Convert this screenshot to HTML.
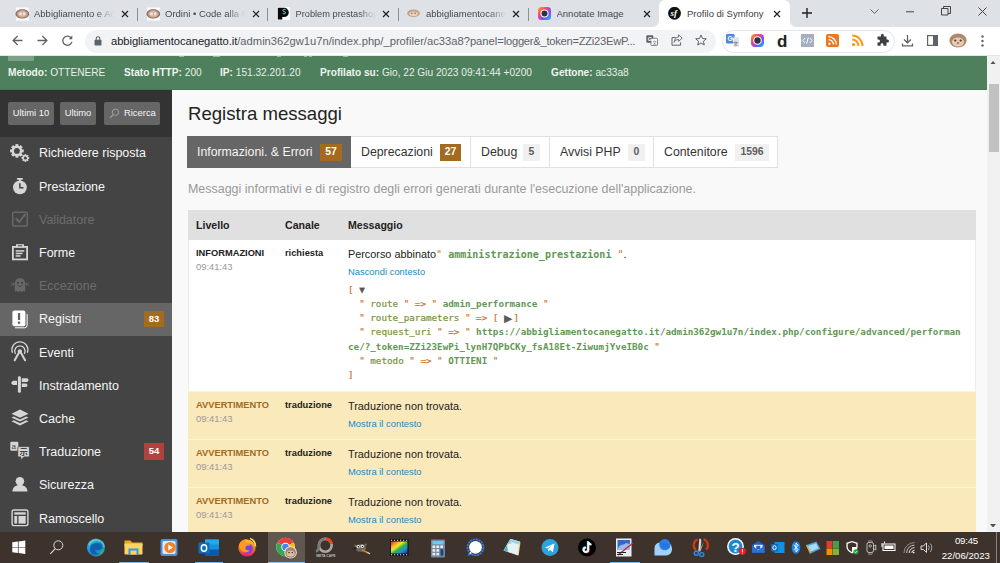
<!DOCTYPE html>
<html lang="it">
<head>
<meta charset="utf-8">
<title>Profilo di Symfony</title>
<style>
*{box-sizing:border-box;margin:0;padding:0}
html,body{width:1000px;height:563px;overflow:hidden;background:#fff;font-family:"Liberation Sans",Arial,sans-serif;}
body{position:relative}
.abs{position:absolute}
/* ---------- chrome ---------- */
#tabstrip{position:absolute;left:0;top:0;width:1000px;height:27px;background:#dee1e6}
.tab{position:absolute;top:0;height:27px;font-size:9.5px;color:#45494d;white-space:nowrap}
.tab .t{position:absolute;top:8px;left:0;overflow:hidden;height:13px;line-height:12px}
.tab .x{position:absolute;top:6px;font-size:11px;color:#333;line-height:14px}
.sep{position:absolute;top:8px;width:1px;height:13px;background:#8b8e93}
#active{position:absolute;left:659px;top:0;width:131px;height:27px;background:#fff;border-radius:6px 6px 0 0}
#toolbar{position:absolute;left:0;top:27px;width:1000px;height:28px;background:#fff}
#tbline{position:absolute;left:0;top:55px;width:1000px;height:1px;background:#e4e6e8}
#omni{position:absolute;left:85px;top:30px;width:630.500px;height:23px;border-radius:12px;background:#f1f3f4}
#url{position:absolute;left:111px;top:34px;font-size:11.2px;line-height:14px;color:#5f6368;white-space:nowrap;letter-spacing:-0.05px}
#url b{font-weight:normal;color:#202124}
#extpill{position:absolute;left:722px;top:30px;width:173px;height:23px;border-radius:12px;background:#fff;border:1px solid #e3e5e8}
/* ---------- page ---------- */
#page{position:absolute;left:0;top:56px;width:987px;height:476px;background:#f9f9f9;overflow:hidden}
#green{position:absolute;left:0;top:0;width:987px;height:33.700px;background:#4f805d;border-bottom:1px solid #48775a}
#green .s{position:absolute;top:10px;font-size:10.15px;line-height:13px;color:#e6efe8;white-space:nowrap}
#green .s b{color:#eef4ef}
#side{position:absolute;left:0;top:34px;width:172px;height:442px;background:#444}
#short{position:absolute;left:0;top:0;width:172px;height:47.300px;background:#333}
.btn{position:absolute;top:12px;height:22.500px;background:#666;border-radius:2px;color:#f5f5f5;font-size:9.4px;line-height:22px;text-align:center;white-space:nowrap}
.mi{position:absolute;left:0;width:172px;height:33.200px;color:#f5f5f5;font-size:12.5px;line-height:33.200px}
.mi span{position:absolute;left:39px;top:.4px;white-space:nowrap}
.mi.dis{color:#6c6c6c}
.mi.sel{background:#666}
.mi svg{position:absolute}
.cnt{position:absolute;left:144px;top:7.500px;width:20px;height:16.500px;line-height:16.500px;text-align:center;font-size:9.5px;font-weight:bold;color:#fff;background:#a46a1f}
/* content */
h2{position:absolute;left:188px;top:46.5px;font-size:18.6px;font-weight:normal;color:#222;line-height:22px;white-space:nowrap}
.tabs{position:absolute;top:80px;height:31.500px;font-size:12.3px;line-height:30px;color:#333;white-space:nowrap;background:#fff;border:1px solid #e0e0e0;border-left:none}
.tabs.act{background:#666;color:#f5f5f5;border:1px solid #666}
.tabs .lb{position:absolute;top:0}
.bdg{position:absolute;top:7px;height:16.5px;line-height:16.5px;font-size:10.4px;font-weight:bold;text-align:center;background:#f0f0f0;color:#5e5e5e}
.bdg.w{background:#a46a1f;color:#fff}
#desc{position:absolute;left:188px;top:126px;font-size:12.46px;line-height:14px;color:#999;white-space:nowrap}
#tbl{position:absolute;left:187.500px;top:154px;width:788px;height:330px;background:#fff}
#th{position:absolute;left:0;top:0;width:788px;height:30px;background:#e0e0e0}
.th{position:absolute;top:9px;font-size:10.6px;font-weight:bold;color:#222;line-height:13px}
.row{position:absolute;left:0;width:788px}
.row.first{box-shadow:inset 1px 0 #ececec,inset -1px 0 #ececec}
.row.w{background:#fae9ba;border-top:1px solid #fcf3da}
.lv{position:absolute;left:8.500px;font-size:9.3px;font-weight:bold;color:#222;line-height:12px;white-space:nowrap}
.row.w .lv{color:#a46a1f}
.tm{position:absolute;left:8.500px;font-size:9.4px;color:#999;line-height:12px}
.ch{position:absolute;left:97.500px;font-size:9.3px;font-weight:bold;color:#222;line-height:12px}
.msg{position:absolute;left:160.500px;font-size:10.85px;color:#222;line-height:14px;white-space:nowrap}
.lnk{position:absolute;left:160.500px;font-size:9.4px;color:#218bc3;line-height:12px;white-space:nowrap}
.mono{font-family:"DejaVu Sans Mono","Liberation Mono",monospace}
.dump{position:absolute;left:160.500px;top:42.700px;font-family:"DejaVu Sans Mono","Liberation Mono",monospace;font-size:9.25px;line-height:14.25px;color:#cc7832;white-space:pre}
.k{color:#789339}
.dump{-webkit-text-stroke:.2px}
.sv{-webkit-text-stroke:0}
.tg2{display:inline-block;width:9.500px;font-family:"DejaVu Sans",sans-serif;font-size:11px;line-height:0;color:#5c5c5c;vertical-align:-.5px;-webkit-text-stroke:0}
.sv{color:#629755;font-weight:bold}
.tg{color:#555}
/* scrollbar */
#sb{position:absolute;left:987px;top:56px;width:13px;height:476px;background:#f1f1f1}
#thumb{position:absolute;left:1.5px;top:28px;width:10.5px;height:68px;background:#c1c1c1}
/* taskbar */
#task{position:absolute;left:0;top:532px;width:1000px;height:31px;background:#3d332c}
.ti{position:absolute;top:0;width:37px;height:31px}
.clock{position:absolute;font-size:9.650px;color:#fff;white-space:nowrap;line-height:11px}
</style>
</head>
<body>
<div id="tabstrip"></div>
<div id="active"></div>
<div id="toolbar"></div>
<div id="tbline"></div>
<div id="omni"></div>
<div id="url"><b>abbigliamentocanegatto.it</b><span style="letter-spacing:0">/admin362gw1u7n/index.php/_profiler/ac33a8?panel=</span><span style="letter-spacing:-0.27px">logger&amp;_token=ZZi23EwP...</span></div>
<div id="extpill"></div>

<!-- tabs -->
<div class="tab" style="left:7px;width:131px">
  <svg class="abs" style="left:7.500px;top:6.500px" width="15" height="14" viewBox="0 0 15 14"><defs><radialGradient id="fg"><stop offset="0" stop-color="#eadccd"/><stop offset=".45" stop-color="#dcc4ae"/><stop offset=".8" stop-color="#b08c78"/><stop offset="1" stop-color="#6e4e4a"/></radialGradient></defs><rect x="1" y=".5" width="12.700" height="13" fill="#fff"/><ellipse cx="7.300" cy="6.900" rx="6.800" ry="4.700" fill="url(#fg)"/><ellipse cx="5.600" cy="6.800" rx="1.500" ry="1" fill="#f3ebe2"/><ellipse cx="9" cy="6.800" rx="1.500" ry="1" fill="#f3ebe2"/><path d="M7.300 5v3.800" stroke="#a88" stroke-width=".6"/></svg>
  <div class="t" style="left:27px;width:82px;-webkit-mask-image:linear-gradient(90deg,#000 62px,transparent 80px)">Abbigliamento e Acc</div>
  <svg class="abs" style="left:114px;top:10px" width="8" height="8" viewBox="0 0 8 8"><path d="M1 1l6 6M7 1l-6 6" stroke="#202124" stroke-width="1.2"/></svg>
</div>
<div class="sep" style="left:137px"></div>
<div class="tab" style="left:138px;width:131px">
  <svg class="abs" style="left:7.500px;top:6.500px" width="15" height="14" viewBox="0 0 15 14"><rect x="1" y=".5" width="12.700" height="13" fill="#fff"/><ellipse cx="7.300" cy="6.900" rx="6.800" ry="4.700" fill="url(#fg)"/><ellipse cx="5.600" cy="6.800" rx="1.500" ry="1" fill="#f3ebe2"/><ellipse cx="9" cy="6.800" rx="1.500" ry="1" fill="#f3ebe2"/><path d="M7.300 5v3.800" stroke="#a88" stroke-width=".6"/></svg>
  <div class="t" style="left:27px;width:82px;-webkit-mask-image:linear-gradient(90deg,#000 62px,transparent 80px)">Ordini • Code alla Mo</div>
  <svg class="abs" style="left:113.5px;top:10px" width="8" height="8" viewBox="0 0 8 8"><path d="M1 1l6 6M7 1l-6 6" stroke="#202124" stroke-width="1.2"/></svg>
</div>
<div class="sep" style="left:267px"></div>
<div class="tab" style="left:268.5px;width:131px">
  <svg class="abs" style="left:8.5px;top:7px" width="13" height="13" viewBox="0 0 13 13"><rect width="13" height="13" fill="#fff"/><path d="M.8 12.500V.8h6.400a4.600 4.600 0 010 9.200H5.300v2.500z" fill="#0a0a0a"/><path d="M8.600 2.600c-1.300-.6-2.800-.1-2.700 1 .1 1.200 2.600.8 2.700 2 .1 1.100-1.600 1.500-2.900.8" stroke="#7fe0ee" stroke-width="1" fill="none"/></svg>
  <div class="t" style="left:27px;width:82px;-webkit-mask-image:linear-gradient(90deg,#000 62px,transparent 80px);font-size:9.250px">Problem prestashop</div>
  <svg class="abs" style="left:113px;top:10px" width="8" height="8" viewBox="0 0 8 8"><path d="M1 1l6 6M7 1l-6 6" stroke="#202124" stroke-width="1.2"/></svg>
</div>
<div class="sep" style="left:398px"></div>
<div class="tab" style="left:399px;width:131px">
  <svg class="abs" style="left:8px;top:7px" width="13" height="13" viewBox="0 0 13 13"><ellipse cx="6.500" cy="6.300" rx="6.300" ry="3.800" fill="#c4a088"/><ellipse cx="6.500" cy="6.700" rx="4.300" ry="2.300" fill="#e6d2be"/><circle cx="4.800" cy="6.300" r=".8" fill="#8a6a58"/><circle cx="8.200" cy="6.300" r=".8" fill="#8a6a58"/></svg>
  <div class="t" style="left:27px;width:82px;-webkit-mask-image:linear-gradient(90deg,#000 62px,transparent 80px)">abbigliamentocanegatto</div>
  <svg class="abs" style="left:113px;top:10px" width="8" height="8" viewBox="0 0 8 8"><path d="M1 1l6 6M7 1l-6 6" stroke="#202124" stroke-width="1.2"/></svg>
</div>
<div class="sep" style="left:528px"></div>
<div class="tab" style="left:529.5px;width:131px">
  <svg class="abs" style="left:8px;top:7px" width="13" height="13" viewBox="0 0 13 13"><defs><linearGradient id="ag" x1="0" y1="0" x2="1" y2="1"><stop offset="0" stop-color="#ffb300"/><stop offset=".35" stop-color="#ff3d7f"/><stop offset=".65" stop-color="#7c4dff"/><stop offset="1" stop-color="#00c6ff"/></linearGradient></defs><rect width="13" height="13" rx="3.500" fill="url(#ag)"/><circle cx="6.500" cy="6.500" r="4" fill="#fff"/><circle cx="6.500" cy="6.500" r="3" fill="#2d3440"/></svg>
  <div class="t" style="left:27px;width:82px">Annotate Image</div>
  <svg class="abs" style="left:113.500px;top:10px" width="8" height="8" viewBox="0 0 8 8"><path d="M1 1l6 6M7 1l-6 6" stroke="#202124" stroke-width="1.2"/></svg>
</div>
<svg class="abs" style="left:653px;top:21px" width="6" height="6" viewBox="0 0 6 6"><path d="M6 0v6H0A6 6 0 006 0z" fill="#fff"/></svg>
<svg class="abs" style="left:790px;top:21px" width="6" height="6" viewBox="0 0 6 6"><path d="M0 0v6h6A6 6 0 010 0z" fill="#fff"/></svg>
<div class="tab" style="left:660px;width:131px;color:#3c4043">
  <svg class="abs" style="left:8px;top:7px" width="13" height="13" viewBox="0 0 13 13"><circle cx="6.500" cy="6.300" r="6.400" fill="#111"/><text x="2.600" y="9" font-family="Liberation Serif,serif" font-style="italic" font-weight="bold" font-size="9" fill="#fff">sf</text></svg>
  <div class="t" style="left:27px;width:82px">Profilo di Symfony</div>
  <svg class="abs" style="left:113px;top:10px" width="8" height="8" viewBox="0 0 8 8"><path d="M1 1l6 6M7 1l-6 6" stroke="#202124" stroke-width="1.2"/></svg>
</div>
<svg class="abs" style="left:802px;top:8px" width="10" height="10" viewBox="0 0 10 10"><path d="M5 0v10M0 5h10" stroke="#202124" stroke-width="1.400"/></svg>
<svg class="abs" style="left:870px;top:9px" width="9" height="5" viewBox="0 0 9 5"><path d="M.5.500l4 3.800 4-3.800" stroke="#5f6368" stroke-width="1" fill="none"/></svg>
<svg class="abs" style="left:906px;top:11px" width="8" height="2" viewBox="0 0 8 2"><path d="M0 .8h8" stroke="#444" stroke-width="1"/></svg>
<svg class="abs" style="left:941px;top:6px" width="10" height="10" viewBox="0 0 10 10"><path d="M.5 2.500h6.500v6.500H.5zM2.500 2.500v-2h7v7h-2.500" stroke="#444" stroke-width="1" fill="none"/></svg>
<svg class="abs" style="left:978px;top:7px" width="9" height="9" viewBox="0 0 9 9"><path d="M.5.500l8 8M8.500.500l-8 8" stroke="#444" stroke-width="1"/></svg>
<!-- toolbar icons -->
<svg class="abs" style="left:12px;top:35px" width="11" height="11" viewBox="0 0 11 11"><path d="M10.500 5.500H1.200M5.600 1L1.100 5.500l4.500 4.500" stroke="#5f6368" stroke-width="1.300" fill="none"/></svg>
<svg class="abs" style="left:37px;top:35px" width="11" height="11" viewBox="0 0 11 11"><path d="M.5 5.500h9.300M5.400 1l4.500 4.500-4.500 4.500" stroke="#5f6368" stroke-width="1.300" fill="none"/></svg>
<svg class="abs" style="left:62px;top:35px" width="11" height="11" viewBox="0 0 11 11"><path d="M9.400 3.300A4.600 4.600 0 109.900 6.800" stroke="#5f6368" stroke-width="1.300" fill="none"/><path d="M10.300.6v3.600H6.700z" fill="#5f6368"/></svg>
<svg class="abs" style="left:94px;top:36px" width="8" height="10" viewBox="0 0 8 10"><rect x=".5" y="3.800" width="7" height="5.700" rx=".8" fill="#5f6368"/><path d="M2.200 4V2.600a1.800 1.800 0 013.600 0V4" stroke="#5f6368" stroke-width="1.100" fill="none"/></svg>
<svg class="abs" style="left:646px;top:35px" width="12" height="11" viewBox="0 0 12 11"><rect x=".3" y=".3" width="7" height="7.500" rx="1" fill="#5f6368"/><rect x="5" y="3.300" width="6.500" height="7.300" rx="1" fill="#fff" stroke="#5f6368" stroke-width=".8"/><text x="1.800" y="6.300" font-family="Liberation Sans,sans-serif" font-size="5.500" font-weight="bold" fill="#fff">G</text><text x="6.300" y="9.300" font-family="Noto Sans CJK SC,sans-serif" font-size="4.500" fill="#5f6368">文</text></svg>
<svg class="abs" style="left:671px;top:34px" width="12" height="12" viewBox="0 0 12 12"><path d="M4.800 3.600H1v7.600h8.600V8.400" stroke="#5f6368" stroke-width="1" fill="none"/><path d="M7.600.8l3.600 3.300-3.600 3.300V5.500C5.300 5.500 4 6.500 3.200 8.300 3.400 5.400 4.900 3.200 7.600 2.800z" stroke="#5f6368" stroke-width=".9" fill="none" stroke-linejoin="round"/></svg>
<svg class="abs" style="left:695px;top:34px" width="12" height="12" viewBox="0 0 12 12"><path d="M6 1l1.500 3.500 3.800.3-2.900 2.500.9 3.700L6 9 2.700 11l.9-3.700L.7 4.800l3.800-.3z" stroke="#5f6368" stroke-width="1" fill="none" stroke-linejoin="round"/></svg>
<!-- extension icons -->
<svg class="abs" style="left:726px;top:34px" width="13" height="13" viewBox="0 0 13 13"><rect x="0" y="0" width="8.500" height="9.500" rx="1.200" fill="#4a86e8"/><path d="M6 3.500h7v8.300a1 1 0 01-1 1H8z" fill="#dfe3ea"/><text x="1.500" y="7.300" font-family="Liberation Sans,sans-serif" font-size="6.500" font-weight="bold" fill="#fff">G</text><text x="7.300" y="11.300" font-family="Noto Sans CJK SC,sans-serif" font-size="5" fill="#666">文</text></svg>
<svg class="abs" style="left:751px;top:34px" width="13" height="13" viewBox="0 0 13 13"><rect width="13" height="13" rx="4" fill="url(#ag)"/><circle cx="6.500" cy="6.500" r="4.300" fill="#fff"/><circle cx="6.500" cy="6.500" r="3.200" fill="#2d3440"/></svg>
<div class="abs" style="left:777px;top:31.500px;font-size:17px;font-weight:bold;color:#222;line-height:20px">d</div>
<svg class="abs" style="left:801px;top:34px" width="13" height="13" viewBox="0 0 13 13"><rect width="13" height="13" fill="#a4afc0"/><path d="M4.200 4L1.800 6.500 4.200 9M8.800 4l2.400 2.500L8.800 9M7.300 3.500L5.700 9.500" stroke="#fff" stroke-width="1" fill="none"/></svg>
<svg class="abs" style="left:826px;top:34px" width="13" height="13" viewBox="0 0 13 13"><rect width="13" height="13" rx="2" fill="#f0761c"/><circle cx="3.500" cy="9.700" r="1.200" fill="#fff"/><path d="M2.400 5.600a5 5 0 015 5M2.400 2.600a8 8 0 018 8" stroke="#fff" stroke-width="1.400" fill="none"/></svg>
<svg class="abs" style="left:851px;top:34px" width="13" height="13" viewBox="0 0 13 13"><circle cx="2.600" cy="10.600" r="1.700" fill="#f79a1d"/><path d="M1.200 5.600a6.300 6.300 0 016.300 6.300M1.200 1.600a10.300 10.300 0 0110.300 10.300" stroke="#f79a1d" stroke-width="2" fill="none"/></svg>
<svg class="abs" style="left:876px;top:34px" width="13" height="13" viewBox="0 0 13 13"><path d="M5 1.300a1.400 1.400 0 012.800 0V2.500h2.700v2.900h1a1.500 1.500 0 010 3h-1v3.300H7.400v-1a1.400 1.400 0 00-2.800 0v1H1.500V8.500h1a1.500 1.500 0 000-3h-1V2.500H5z" fill="#3c4043"/></svg>
<svg class="abs" style="left:901px;top:34px" width="13" height="13" viewBox="0 0 13 13"><path d="M6.500 1v7.500M3 5.500l3.500 3.300L10 5.500M1.500 9.500v2.300h10V9.500" stroke="#5f6368" stroke-width="1.300" fill="none"/></svg>
<svg class="abs" style="left:927px;top:35px" width="11" height="11" viewBox="0 0 11 11"><rect x=".6" y=".6" width="9.800" height="9.800" stroke="#5f6368" stroke-width="1.200" fill="none"/><rect x="6" y=".6" width="4.400" height="9.800" fill="#5f6368"/></svg>
<svg class="abs" style="left:949px;top:32px" width="18" height="17" viewBox="0 0 18 17"><ellipse cx="9" cy="8.500" rx="8.600" ry="7" fill="#b08868"/><ellipse cx="9" cy="10" rx="6" ry="4.500" fill="#e4cdb4"/><circle cx="6.300" cy="8.500" r="1.100" fill="#4a3426"/><circle cx="11.700" cy="8.500" r="1.100" fill="#4a3426"/><ellipse cx="9" cy="11" rx="1.300" ry=".8" fill="#8a5f48"/></svg>
<svg class="abs" style="left:981px;top:35px" width="3" height="12" viewBox="0 0 3 12"><circle cx="1.500" cy="1.500" r="1.200" fill="#5f6368"/><circle cx="1.500" cy="6" r="1.200" fill="#5f6368"/><circle cx="1.500" cy="10.500" r="1.200" fill="#5f6368"/></svg>

<div id="page">
  <div id="green">
    <div class="abs" style="left:8px;top:0;width:26px;height:5px;background:rgba(255,255,255,.25)"></div>
    <div class="abs" style="left:179px;top:0;width:5px;height:1.300px;background:rgba(255,255,255,.45)"></div><div class="abs" style="left:213px;top:0;width:7px;height:1.300px;background:rgba(255,255,255,.45)"></div><div class="abs" style="left:277px;top:0;width:4px;height:1.300px;background:rgba(255,255,255,.45)"></div><div class="abs" style="left:304px;top:0;width:3px;height:1.300px;background:rgba(255,255,255,.45)"></div><div class="abs" style="left:309px;top:0;width:3px;height:1.300px;background:rgba(255,255,255,.45)"></div><div class="abs" style="left:343px;top:0;width:5px;height:1.300px;background:rgba(255,255,255,.45)"></div>
    <div class="s" style="left:8px"><b>Metodo:</b> OTTENERE</div>
    <div class="s" style="left:124px"><b>Stato HTTP:</b> 200</div>
    <div class="s" style="left:220px"><b>IP:</b> 151.32.201.20</div>
    <div class="s" style="left:320px"><b>Profilato su:</b> Gio, 22 Giu 2023 09:41:44 +0200</div>
    <div class="s" style="left:551px"><b>Gettone:</b> ac33a8</div>
  </div>
  <div id="side">
    <div id="short">
      <div class="btn" style="left:8px;width:46px">Ultimi 10</div>
      <div class="btn" style="left:60px;width:36px">Ultimo</div>
      <div class="btn" style="left:104px;width:56px;text-align:left;padding-left:20px"><svg class="abs" style="left:5px;top:6px" width="11" height="11" viewBox="0 0 11 11"><circle cx="6.500" cy="4.200" r="3.200" stroke="#a0a0a0" stroke-width="1" fill="none"/><path d="M4.200 6.600L1 9.800" stroke="#a0a0a0" stroke-width="1.200"/></svg>Ricerca</div>
    </div>
    <div class="mi" style="top:47.0px"><svg style="left:0;top:-0.0px" width="40" height="33" viewBox="0 0 40 33"><g fill="#d6d6d6"><mask id="gm"><rect width="40" height="33" fill="#fff"/><circle cx="16.900" cy="13.900" r="2.900" fill="#000"/><circle cx="25.400" cy="21" r="1.500" fill="#000"/></mask><g mask="url(#gm)"><g transform="translate(16.9 13.9)"><rect x="-1.50" y="-6.80" width="3.00" height="6.80" transform="rotate(0.0)"/><rect x="-1.50" y="-6.80" width="3.00" height="6.80" transform="rotate(45.0)"/><rect x="-1.50" y="-6.80" width="3.00" height="6.80" transform="rotate(90.0)"/><rect x="-1.50" y="-6.80" width="3.00" height="6.80" transform="rotate(135.0)"/><rect x="-1.50" y="-6.80" width="3.00" height="6.80" transform="rotate(180.0)"/><rect x="-1.50" y="-6.80" width="3.00" height="6.80" transform="rotate(225.0)"/><rect x="-1.50" y="-6.80" width="3.00" height="6.80" transform="rotate(270.0)"/><rect x="-1.50" y="-6.80" width="3.00" height="6.80" transform="rotate(315.0)"/></g><circle cx="16.900" cy="13.900" r="5.300"/><g transform="translate(25.4 21)"><rect x="-0.85" y="-3.90" width="1.70" height="3.90" transform="rotate(0.0)"/><rect x="-0.85" y="-3.90" width="1.70" height="3.90" transform="rotate(45.0)"/><rect x="-0.85" y="-3.90" width="1.70" height="3.90" transform="rotate(90.0)"/><rect x="-0.85" y="-3.90" width="1.70" height="3.90" transform="rotate(135.0)"/><rect x="-0.85" y="-3.90" width="1.70" height="3.90" transform="rotate(180.0)"/><rect x="-0.85" y="-3.90" width="1.70" height="3.90" transform="rotate(225.0)"/><rect x="-0.85" y="-3.90" width="1.70" height="3.90" transform="rotate(270.0)"/><rect x="-0.85" y="-3.90" width="1.70" height="3.90" transform="rotate(315.0)"/></g><circle cx="25.400" cy="21" r="3"/></g></g></svg><span>Richiedere risposta</span></div>
    <div class="mi" style="top:80.2px"><svg style="left:0;top:-0.2px" width="40" height="33" viewBox="0 0 40 33"><g fill="#d6d6d6"><circle cx="19.900" cy="17.300" r="6.900"/><rect x="16.800" y="8" width="6.200" height="1.700" rx=".8"/><rect x="19" y="9" width="1.800" height="2"/><path d="M19.900 13.200v4.600h3.600" stroke="#444" stroke-width="1.500" fill="none"/></g></svg><span>Prestazione</span></div>
    <div class="mi dis" style="top:113.4px"><svg style="left:0;top:-0.4px" width="40" height="33" viewBox="0 0 40 33"><g fill="none" stroke="#686868" stroke-width="1.500"><rect x="12.700" y="9.300" width="14.600" height="13.600" rx="1"/><path d="M15.800 15.200l3.400 3.800 6.400-8.200" stroke-width="1.900"/></g></svg><span>Validatore</span></div>
    <div class="mi" style="top:146.6px"><svg style="left:0;top:-0.6px" width="40" height="33" viewBox="0 0 40 33"><g><path d="M12 10h16v14.300H12z" fill="#d6d6d6"/><rect x="13.800" y="11.800" width="12.400" height="10.700" fill="#444"/><rect x="16" y="8.200" width="8" height="3.300" fill="#d6d6d6"/><rect x="17.800" y="9.300" width="4.400" height="1" fill="#444"/><rect x="15.700" y="14.200" width="8.600" height="1.500" fill="#d6d6d6"/><rect x="15.700" y="16.700" width="6.800" height="1.500" fill="#d6d6d6"/><rect x="15.700" y="19.200" width="4.800" height="1.500" fill="#d6d6d6"/></g></svg><span>Forme</span></div>
    <div class="mi dis" style="top:179.8px"><svg style="left:0;top:-0.8px" width="40" height="33" viewBox="0 0 40 33"><g fill="#686868"><path d="M14.800 23V14.200a5.200 5.200 0 0110.400 0V23l-1.800-1.300-1.700 1.300-1.700-1.300-1.700 1.300-1.700-1.300z"/><path d="M11 13.500l1.500 1.200 1.500-.5v1.800l-2-.3-1.200 1.200M29 13.500l-1.500 1.200-1.500-.5v1.800l2-.3 1.200 1.200" stroke="#686868" stroke-width=".9" fill="none"/><circle cx="18" cy="13.800" r="1.100" fill="#444"/><circle cx="22" cy="13.800" r="1.100" fill="#444"/><path d="M17.500 16.500q2.500 2 5 0" stroke="#444" stroke-width=".9" fill="none"/></g></svg><span>Eccezione</span></div>
    <div class="mi sel" style="top:213.0px"><svg style="left:0;top:-1.0px" width="40" height="33" viewBox="0 0 40 33"><g><path d="M15 25.800h9.500a2.600 2.600 0 002.600-2.600V12" stroke="#fff" stroke-width="1" fill="none"/><rect x="12.400" y="8.600" width="13" height="15.600" rx="2" fill="#fff"/><rect x="17.900" y="11" width="2.300" height="7" fill="#666"/><rect x="17.900" y="19.500" width="2.300" height="2.300" fill="#666"/></g></svg><span>Registri</span><div class="cnt">83</div></div>
    <div class="mi" style="top:246.2px"><svg style="left:0;top:-1.2px" width="40" height="33" viewBox="0 0 40 33"><g stroke="#d6d6d6" fill="none" stroke-linecap="round"><circle cx="19.900" cy="16.300" r="2.100" fill="#d6d6d6" stroke="none"/><path d="M19 17.500l-4.300 7.800M20.800 17.500l4.300 7.800" stroke-width="2"/><path d="M15.300 18.500a5.200 5.200 0 119.200 0" stroke-width="1.300"/><path d="M12.300 17.300a8 8 0 1115.200 0" stroke-width="1.300"/></g></svg><span>Eventi</span></div>
    <div class="mi" style="top:279.4px"><svg style="left:0;top:-1.4px" width="40" height="33" viewBox="0 0 40 33"><g fill="#d6d6d6"><rect x="17.900" y="8.200" width="3" height="16.600" rx="1.400"/><path d="M17 12.800v4.200h-4.200L11 14.900l1.800-2.100z"/><path d="M21.800 10.200h5.600l1.400 1.900-1.400 1.900h-5.600zM21.800 15.400h4.600l1.300 1.800-1.300 1.800h-4.600z"/></g></svg><span>Instradamento</span></div>
    <div class="mi" style="top:312.6px"><svg style="left:0;top:-1.6px" width="40" height="33" viewBox="0 0 40 33"><g fill="#d6d6d6"><path d="M20 8.600l8.500 4.100-8.500 4.100-8.500-4.100z"/><path d="M11.500 16.500l2.300-1.100 6.200 3 6.200-3 2.300 1.100-8.500 4.100z"/><path d="M11.500 20.300l2.300-1.100 6.200 3 6.200-3 2.300 1.100-8.500 4.100z"/></g></svg><span>Cache</span></div>
    <div class="mi" style="top:345.8px"><svg style="left:0;top:-1.8px" width="40" height="33" viewBox="0 0 40 33"><g fill="#d6d6d6"><path d="M11.300 7.800h6a1 1 0 011 1v7a1 1 0 01-1 1h-6a1 1 0 01-1-1v-7a1 1 0 011-1z"/><path d="M18.800 12.600h9.600a1 1 0 011 1v8.300a1 1 0 01-1 1h-4.600l-3 3v-3h-2a1 1 0 01-1-1v-8.300a1 1 0 011-1z" stroke="#444" stroke-width=".8"/><text x="11.600" y="15.300" font-family="Liberation Sans,sans-serif" font-size="8" fill="#444">a</text><text x="19.400" y="21.300" font-family="Noto Sans CJK SC,sans-serif" font-size="8.400" font-weight="bold" fill="#444">示</text></g></svg><span>Traduzione</span><div class="cnt" style="background:#b0413e">54</div></div>
    <div class="mi" style="top:379.0px"><svg style="left:0;top:-2.0px" width="40" height="33" viewBox="0 0 40 33"><g fill="#d6d6d6"><circle cx="19.900" cy="14.200" r="4.300"/><path d="M12.400 24.600c0-4 3-6.500 7.500-6.500s7.500 2.500 7.500 6.500z"/></g></svg><span>Sicurezza</span></div>
    <div class="mi" style="top:412.2px"><svg style="left:0;top:-2.2px" width="40" height="33" viewBox="0 0 40 33"><g><rect x="12.100" y="10" width="15.800" height="15.600" rx="1.800" fill="none" stroke="#d6d6d6" stroke-width="1.400"/><rect x="14.300" y="12.300" width="11.400" height="2.300" fill="#d6d6d6"/><rect x="14.300" y="16" width="2.800" height="7.600" fill="#d6d6d6"/><rect x="18.500" y="16" width="7.200" height="7.600" fill="#d6d6d6"/></g></svg><span>Ramoscello</span></div>
  </div>
  <h2>Registra messaggi</h2>
  <div class="tabs act" style="left:187px;width:164px"><span class="lb" style="left:9px">Informazioni. &amp; Errori</span><div class="bdg w" style="left:132px;width:22px">57</div></div>
  <div class="tabs" style="left:351px;width:120px"><span class="lb" style="left:10px">Deprecazioni</span><div class="bdg w" style="left:89px;width:21px">27</div></div>
  <div class="tabs" style="left:471px;width:79px"><span class="lb" style="left:10px">Debug</span><div class="bdg" style="left:52px;width:17px">5</div></div>
  <div class="tabs" style="left:550px;width:104px"><span class="lb" style="left:10px">Avvisi PHP</span><div class="bdg" style="left:78px;width:17px">0</div></div>
  <div class="tabs" style="left:654px;width:124px"><span class="lb" style="left:10px">Contenitore</span><div class="bdg" style="left:81px;width:34px">1596</div></div>
  <div id="desc">Messaggi informativi e di registro degli errori generati durante l'esecuzione dell'applicazione.</div>
  <div id="tbl">
    <div id="th"><div class="th" style="left:8.500px">Livello</div><div class="th" style="left:97.500px">Canale</div><div class="th" style="left:160.500px">Messaggio</div></div>
    <div class="row first" style="top:30px;height:151px">
      <div class="lv" style="top:7px">INFORMAZIONI</div><div class="tm" style="top:20.500px">09:41:43</div><div class="ch" style="top:7px">richiesta</div>
      <div class="msg" style="top:7px">Percorso abbinato<span class="mono" style="font-size:10.050px;color:#cc7832">" <span class="sv">amministrazione_prestazioni</span> "</span>.</div>
      <div class="lnk" style="top:25.500px">Nascondi contesto</div>
<div class="dump">[ <span class="tg">▼</span>
  " <span class="k">route</span> " =&gt; " <span class="sv">admin_performance</span> "
  " <span class="k">route_parameters</span> " =&gt; [ <span class="tg2">▶</span>]
  " <span class="k">request_uri</span> " =&gt; " <span class="sv">https://abbigliamentocanegatto.it/admin362gw1u7n/index.php/configure/advanced/performan</span>
<span class="sv">ce/?_token=ZZi23EwPi_lynH7QPbCKy_fsA18Et-ZiwumjYveIB0c</span> "
  " <span class="k">metodo</span> " =&gt; " <span class="sv">OTTIENI</span> "
]</div>
    </div>
    <div class="row w" style="top:181px;height:48px"><div class="lv" style="top:7px">AVVERTIMENTO</div><div class="tm" style="top:20.500px">09:41:43</div><div class="ch" style="top:7px">traduzione</div><div class="msg" style="top:7px">Traduzione non trovata.</div><div class="lnk" style="top:25.500px">Mostra il contesto</div></div>
    <div class="row w" style="top:229px;height:48px"><div class="lv" style="top:7px">AVVERTIMENTO</div><div class="tm" style="top:20.500px">09:41:43</div><div class="ch" style="top:7px">traduzione</div><div class="msg" style="top:7px">Traduzione non trovata.</div><div class="lnk" style="top:25.500px">Mostra il contesto</div></div>
    <div class="row w" style="top:277px;height:48px"><div class="lv" style="top:7px">AVVERTIMENTO</div><div class="tm" style="top:20.500px">09:41:43</div><div class="ch" style="top:7px">traduzione</div><div class="msg" style="top:7px">Traduzione non trovata.</div><div class="lnk" style="top:25.500px">Mostra il contesto</div></div>
  </div>
</div>
<div id="sb"><div id="thumb"></div><svg class="abs" style="left:3.200px;top:4.800px" width="6" height="3.500" viewBox="0 0 6 3.500"><path d="M0 3.500l3-3.500 3 3.500z" fill="#505050"/></svg><svg class="abs" style="left:3.200px;top:467.500px" width="6" height="3.500" viewBox="0 0 6 3.500"><path d="M0 0l3 3.500 3-3.500z" fill="#505050"/></svg></div>
<div id="task">
<div class="abs" style="left:268px;top:0;width:37px;height:31px;background:#5f5750"></div>
<div class="abs" style="left:119px;top:30px;width:30px;height:1.500px;background:#76b9ed"></div>
<div class="abs" style="left:195px;top:30px;width:28px;height:1.500px;background:#76b9ed"></div>
<div class="abs" style="left:268px;top:29.500px;width:37px;height:1.500px;background:#8ec5f0"></div>
<div class="abs" style="left:610px;top:30px;width:30px;height:1.500px;background:#76b9ed"></div>
<svg class="abs" style="left:0;top:0" width="1000" height="31" viewBox="0 0 1000 31">
<defs>
<linearGradient id="rb" x1="0" y1="0" x2="1" y2="1"><stop offset="0" stop-color="#e5261f"/><stop offset=".22" stop-color="#f7a21b"/><stop offset=".38" stop-color="#f3e726"/><stop offset=".55" stop-color="#2fb34a"/><stop offset=".75" stop-color="#1a8fd6"/><stop offset="1" stop-color="#1b2a9c"/></linearGradient>
<linearGradient id="ff" x1="0" y1="0" x2="0" y2="1"><stop offset="0" stop-color="#ffcb2e"/><stop offset=".5" stop-color="#ff7a1a"/><stop offset="1" stop-color="#e31587"/></linearGradient>
<linearGradient id="ed" x1="0" y1="0" x2="1" y2="1"><stop offset="0" stop-color="#35c1f1"/><stop offset=".6" stop-color="#1b7fd4"/><stop offset="1" stop-color="#35d07a"/></linearGradient>
</defs>
<!-- windows -->
<g fill="#fff"><path d="M12.300 10.300l5.600-.8v5.400h-5.600zM18.600 9.400l6.700-1v6.500h-6.700zM12.300 15.600h5.600V21l-5.600-.8zM18.600 15.600h6.700v6.500l-6.700-1z"/></g>
<!-- search -->
<circle cx="58.300" cy="13.300" r="4.500" stroke="#d8d8d8" stroke-width="1" fill="none"/><path d="M55.200 16.600L50.300 21.800" stroke="#d8d8d8" stroke-width="1.100"/>
<!-- edge -->
<circle cx="96" cy="15.500" r="9" fill="url(#ed)"/><path d="M90 17c0-4 3-6 6.500-6s5.500 2 5.500 4.500c0 1.500-1.500 2.500-3 2.500h-4c0 2 2 4 5 3.500-3 2.500-10 1.500-10-4.500z" fill="#0c59a4" opacity=".85"/><path d="M89 13c2-4 6-5.500 10-4.500 3 1 5 3.500 5 6.500" stroke="#7ee0a0" stroke-width="1.500" fill="none" opacity=".7"/>
<!-- explorer -->
<path d="M124.500 8.500h6l1.500 2h10.500v4h-18z" fill="#e8a91d"/><rect x="124.500" y="11.500" width="18" height="11" rx=".8" fill="#fcd462"/><rect x="128.500" y="16.500" width="10" height="6" fill="#3f93e0"/><rect x="130.500" y="18.500" width="6" height="4" fill="#fcd462"/>
<!-- media player -->
<rect x="160.500" y="7" width="17" height="17" rx="2" fill="#4f8fd6"/><rect x="162.500" y="9" width="13" height="13" rx="1.500" fill="#dbe9f8"/><circle cx="170" cy="15.500" r="5.600" fill="#f4821f"/><path d="M168.300 12.600l4.600 2.900-4.600 2.900z" fill="#fff"/>
<!-- outlook -->
<rect x="205" y="7.500" width="14" height="16" rx="1" fill="#1490df"/><rect x="205" y="7.500" width="14" height="5" fill="#28a8ea"/><rect x="205" y="17.500" width="14" height="6" fill="#0a5aa8"/><rect x="198.500" y="10.500" width="11" height="11" rx="1" fill="#0f6cbd"/><ellipse cx="204" cy="16" rx="2.700" ry="3.200" stroke="#fff" stroke-width="1.400" fill="none"/>
<!-- firefox -->
<circle cx="247" cy="16" r="8.600" fill="url(#ff)"/><circle cx="248" cy="16.500" r="4.800" fill="#7542e5"/><path d="M239 13c1-4 5-6.500 8.500-5.500-2 1-2.500 2.500-1.500 4 2-.5 4 .5 4.500 2.500-2-1-4.500-.5-5 1.500s2 3.500 4.500 3c-2 2.500-7 2.500-9-.5-1.500-2-1.500-3.500-2-5z" fill="#ff9a1f"/><path d="M250 6.500c3 1 5.500 4 5.500 8" stroke="#ffd84a" stroke-width="1.500" fill="none"/>
<!-- chrome with avatar -->
<g transform="translate(285.500 15) scale(1.120) translate(-284.500 -15)"><circle cx="284.500" cy="15" r="8.300" fill="#fff"/><path d="M284.500 15L277.300 10.900A8.300 8.300 0 01291.700 10.900z" fill="#ea4335"/><path d="M284.500 15L291.700 10.900A8.300 8.300 0 01284.500 23.300z" fill="#fbbc05"/><path d="M284.500 15L284.500 23.300A8.300 8.300 0 01277.300 10.900z" fill="#34a853"/><circle cx="284.500" cy="15" r="3.800" fill="#fff"/><circle cx="284.500" cy="15" r="3" fill="#4285f4"/></g>
<circle cx="290.600" cy="20.400" r="6.200" fill="#f1ebe6"/><circle cx="290.600" cy="20.400" r="5.300" fill="#a8846a"/><ellipse cx="290.600" cy="21.400" rx="3.900" ry="3" fill="#d9c0a8"/><circle cx="289" cy="20.600" r=".8" fill="#4a3426"/><circle cx="292.200" cy="20.600" r=".8" fill="#4a3426"/>
<!-- meta cafe -->
<circle cx="325.300" cy="13.300" r="6.400" stroke="#a9a9a9" stroke-width="2.600" fill="none"/><path d="M325.300 6.900a6.400 6.400 0 00-6.400 6.400c0 3-.5 5.500-2.900 6.300" stroke="#7b7b7b" stroke-width="2.600" fill="none"/><path d="M325.800 6.900a6.400 6.400 0 015.900 5.200" stroke="#f0421c" stroke-width="2.600" fill="none"/><text x="316.200" y="24.600" font-family="Liberation Sans,sans-serif" font-size="3.400" font-weight="bold" fill="#bbb">META CAFE</text>
<!-- gimp -->
<ellipse cx="360.500" cy="16" rx="5.600" ry="3.800" fill="#6e675c"/><path d="M354.500 13.500l2.500 1M366.500 12l-2.500 2" stroke="#6e675c" stroke-width="2"/><circle cx="358.300" cy="14.600" r="1.700" fill="#eee"/><circle cx="362.200" cy="14.300" r="1.700" fill="#eee"/><circle cx="358.500" cy="14.800" r=".8" fill="#111"/><circle cx="362.400" cy="14.500" r=".8" fill="#111"/><ellipse cx="355" cy="16.500" rx="1.600" ry="1.300" fill="#222"/><path d="M362 18l6.500 3" stroke="#c98a3a" stroke-width="1.400"/><path d="M367.500 20.500l2.500 1.300" stroke="#ddd" stroke-width="1.200"/>
<!-- rainbow film -->
<rect x="390" y="7" width="18.500" height="17" fill="#111"/><rect x="391" y="9.500" width="16.500" height="12" fill="url(#rb)"/><path d="M391 21.500L407.500 9.500V21.500z" fill="#000" opacity=".0"/><g fill="#eee"><rect x="391" y="7.700" width="1.200" height="1"/><rect x="394" y="7.700" width="1.200" height="1"/><rect x="397" y="7.700" width="1.200" height="1"/><rect x="400" y="7.700" width="1.200" height="1"/><rect x="403" y="7.700" width="1.200" height="1"/><rect x="406" y="7.700" width="1.200" height="1"/><rect x="391" y="22.300" width="1.200" height="1"/><rect x="394" y="22.300" width="1.200" height="1"/><rect x="397" y="22.300" width="1.200" height="1"/><rect x="400" y="22.300" width="1.200" height="1"/><rect x="403" y="22.300" width="1.200" height="1"/><rect x="406" y="22.300" width="1.200" height="1"/></g>
<!-- calculator -->
<rect x="431" y="7.500" width="14" height="18" rx="1" fill="#768a9c"/><rect x="432.500" y="9" width="11" height="3.300" fill="#5fd2f2"/><g fill="#e8eef4"><rect x="432.500" y="13.500" width="2.700" height="2.500"/><rect x="436.400" y="13.500" width="2.700" height="2.500"/><rect x="440.300" y="13.500" width="2.700" height="2.500"/><rect x="432.500" y="17.200" width="2.700" height="2.500"/><rect x="436.400" y="17.200" width="2.700" height="2.500"/><rect x="432.500" y="20.900" width="2.700" height="2.500"/><rect x="436.400" y="20.900" width="2.700" height="2.500"/></g><rect x="440.500" y="17.200" width="2.900" height="6.400" fill="#12478f"/>
<!-- signal -->
<circle cx="475.500" cy="15.300" r="8" fill="none" stroke="#3a76f0" stroke-width="1.700" stroke-dasharray="2.200 .7"/><path d="M469 20.500l-1.500 3.500 4-1.200z" fill="#3a76f0"/><circle cx="475.500" cy="15.300" r="6.400" fill="#fff"/><path d="M470.500 19.500l-1.300 2.600 2.900-.9z" fill="#fff"/>
<!-- notepad -->
<path d="M510.500 7l9 2.500 1 .800-1.800 13-1 .200-14.100-5z" fill="#e9c766"/><path d="M510.500 7l9 2.500-1.500 13.500-14.400-4.500z" fill="#e4f1f6"/><path d="M510.500 7l9 2.500-.4 3-9.800-3z" fill="#9ed3e6"/><path d="M503.600 18.500l3.400-6 1 7.400z" fill="#4fb3c6"/><path d="M507 12.500l3-5 1.500 4z" fill="#8fd0de"/>
<!-- telegram -->
<circle cx="550" cy="15.500" r="8.500" fill="#2aa3e0"/><path d="M545 15.600l9.500-4-1.600 8.600-3-2.200-1.600 1.500-.2-2.500 4.300-3.800-5.300 3.300z" fill="#fff"/>
<!-- tiktok -->
<circle cx="587" cy="15.500" r="9" fill="#000"/><path d="M588.300 9.500v8.300a2.300 2.300 0 11-2.300-2.300" stroke="#25f4ee" stroke-width="1.700" fill="none" transform="translate(-.6 -.4)"/><path d="M588.300 9.500v8.300a2.300 2.300 0 11-2.300-2.300" stroke="#fe2c55" stroke-width="1.700" fill="none" transform="translate(.6 .4)"/><path d="M588.300 9.500v8.300a2.300 2.300 0 11-2.300-2.300M588.300 9.800c.4 1.700 1.600 2.700 3.300 2.800" stroke="#fff" stroke-width="1.700" fill="none"/>
<!-- paint-like -->
<rect x="616" y="6.500" width="15.500" height="18" fill="#e9edf5"/><rect x="617.500" y="8" width="12.500" height="10" fill="#3566c8"/><path d="M618 16c3-5 6-2 8-5l4 1v6h-12z" fill="#9db9ea"/><path d="M618 23l15-12" stroke="#c62828" stroke-width="1.400"/><path d="M617 20.500h9M617 22.500h6" stroke="#222" stroke-width="1"/>
<!-- chat -->
<path d="M660 10.500h6a6 6 0 016 6v1a6 6 0 01-6 6h-11.500v-7.500a5.500 5.500 0 015.500-5.500z" fill="#9fd1fa"/><circle cx="664.800" cy="12.700" r="5.600" fill="#2f80ed"/><path d="M660.200 10.600a5.600 5.600 0 009.800 4.400 6 6 0 00-4-4.500z" fill="#1f6fe0" opacity=".6"/>
<!-- scissors -->
<path d="M697.500 7.600a6.200 6.200 0 00-1.500 10.500" stroke="#d63a12" stroke-width="2.200" fill="none"/><path d="M703.500 7.300a6.200 6.200 0 012.600 10.300" stroke="#d63a12" stroke-width="2.200" fill="none"/><path d="M699.300 6.500c1.500 0 2 1 2 2.500l-1 10h-2z" fill="#d9d9d9"/><path d="M703.800 10l-3.500 9.500h-1.800z" fill="#b9b9b9"/><circle cx="696.300" cy="21.300" r="2" stroke="#2f8fe6" stroke-width="1.400" fill="none"/><circle cx="701.800" cy="22.600" r="2" stroke="#2f8fe6" stroke-width="1.400" fill="none"/>
<!-- help -->
<circle cx="735.500" cy="14.500" r="8.400" fill="#fff"/><circle cx="735.500" cy="14.500" r="6.900" fill="#1a8ad0"/><text x="731.500" y="19.600" font-family="Liberation Sans,sans-serif" font-size="13.500" font-weight="bold" fill="#fff">?</text><circle cx="742.400" cy="19.300" r="3.500" fill="#ee1c25"/><rect x="741.900" y="17.200" width="1" height="2.800" fill="#fff"/><rect x="741.900" y="20.600" width="1" height="1" fill="#fff"/>
<!-- tray icons -->
<path d="M752 13l6.300-4 6.300 4v7.800h-12.600z" fill="#1e5fc6"/><rect x="754" y="12.800" width="8.600" height="5" fill="#e3f2fd"/><rect x="756.300" y="13.800" width="4" height="3.300" fill="#1e5fc6"/><path d="M752 13.500l6.300 4.500 6.300-4.500v7.300h-12.600z" fill="#2a6fd6"/>
<rect x="774.500" y="10" width="10" height="11" fill="#1490df"/><rect x="771" y="12" width="7" height="7.500" fill="#0f6cbd"/><ellipse cx="774.500" cy="15.700" rx="1.700" ry="2" stroke="#fff" stroke-width="1" fill="none"/>
<ellipse cx="796" cy="15.500" rx="4.300" ry="6.300" fill="#1e88e5"/><path d="M793.800 12.800l4.400 5-2.200 2.200V11l2.200 2.200-4.400 5" stroke="#fff" stroke-width=".9" fill="none"/>
<path d="M806.500 13l10-3.500 4 7.500-10 4.500z" fill="#4aa3df"/><path d="M808 14l8-2.800 2.500 5-8 3.500z" fill="#a6dcf5"/><path d="M806.500 13l4 8.500" stroke="#e6b422" stroke-width="1.300"/>
<rect x="826.500" y="9" width="6" height="7" fill="#e53935"/><rect x="833" y="9" width="6" height="7" fill="#43a047"/><rect x="826.500" y="16.500" width="6" height="6.500" fill="#fb8c00"/><rect x="833" y="16.500" width="6" height="6.500" fill="#7cb342"/>
<g transform="translate(852 15) scale(.86) translate(-852 -15.500)"><path d="M852 8.500l6.500 2v5c0 3.500-3 6-6.500 7.500-3.500-1.500-6.500-4-6.500-7.500v-5z" fill="#fff"/><path d="M852 10v11.300c-2.600-1.200-5-3.200-5-5.800v-3.900zM852 15.500h5v-3.900l-5-1.600z" fill="#3d332c"/><circle cx="856.500" cy="21" r="3" fill="#2e9e47"/><path d="M855 21l1.100 1.200 2-2.200" stroke="#fff" stroke-width=".8" fill="none"/></g>
<rect x="867" y="10.500" width="6.500" height="10" rx="1.800" stroke="#ddd" stroke-width=".8" fill="none"/><circle cx="870.200" cy="14" r="1.200" stroke="#ddd" stroke-width=".7" fill="none"/><path d="M873.500 14.300l2.300-1.300v5l-2.300-1.300" stroke="#ddd" stroke-width=".8" fill="none"/><path d="M868 9.300q2.200-1 4.500 0M868 21.800q2.200 1 4.500 0" stroke="#ccc" stroke-width=".7" fill="none"/>
<rect x="883" y="12" width="12" height="6.500" stroke="#fff" stroke-width="1" fill="none"/><rect x="884.500" y="13.500" width="9" height="3.500" fill="#fff"/><path d="M882 11v4M884.500 9.500v2" stroke="#fff" stroke-width="1"/>
<path d="M904 21a10.500 10.500 0 0110.500-10.500" stroke="#999" stroke-width=".9" fill="none"/><path d="M906.600 21a7.900 7.900 0 017.900-7.900" stroke="#d0d0d0" stroke-width=".9" fill="none"/><path d="M909.200 21a5.300 5.300 0 015.300-5.300" stroke="#f0f0f0" stroke-width=".9" fill="none"/><path d="M911.800 21a2.700 2.700 0 012.700-2.700" stroke="#fff" stroke-width=".9" fill="none"/><circle cx="913.800" cy="20.600" r=".8" fill="#fff"/>
<path d="M921 14h2.300l3.200-3v9.400l-3.200-3H921z" stroke="#f0f0f0" stroke-width=".9" fill="none"/><path d="M928.300 13.300a3.600 3.600 0 010 4.800M930.200 11.500a6.300 6.300 0 010 8.400" stroke="#ccc" stroke-width=".8" fill="none"/>
</svg>
<div class="abs" style="left:996.300px;top:0;width:.8px;height:31px;background:#8a827c"></div>
<div class="clock" style="left:955px;top:3px;letter-spacing:-.25px">09:45</div>
<div class="clock" style="left:941.700px;top:17.800px">22/06/2023</div>
</div>
</body>
</html>
